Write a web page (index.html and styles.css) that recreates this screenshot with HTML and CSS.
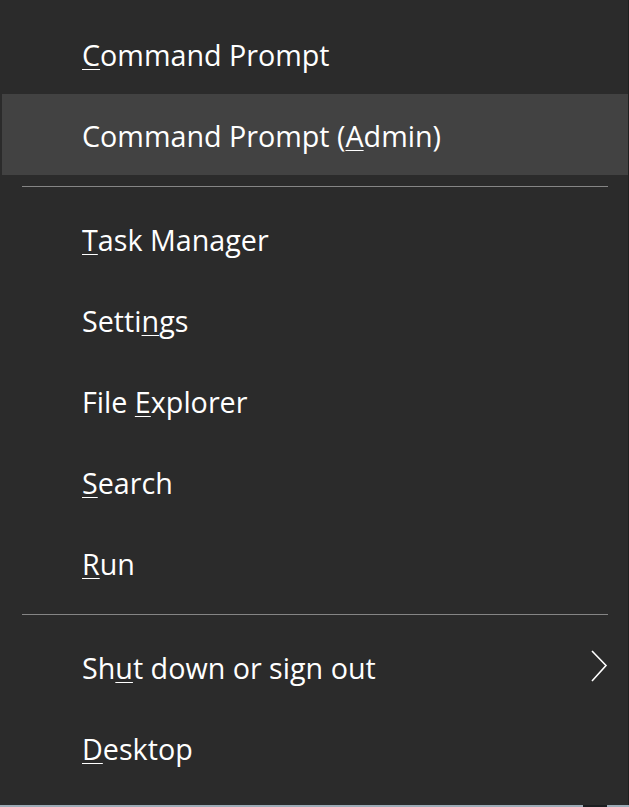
FILE: index.html
```html
<!DOCTYPE html>
<html lang="en">
<head>
    <meta charset="UTF-8">
    <meta name="viewport" content="width=device-width, initial-scale=1.0">
    <title>Quick Link Menu</title>
    <link rel="stylesheet" href="styles.css">
</head>
<body>
    <nav class="menu">
        <div class="menu-item"><span><u>C</u>ommand Prompt</span></div>
        <div class="menu-item active"><span>Command Prompt (<u>A</u>dmin)</span></div>

        <div class="separator"></div>

        <div class="menu-item"><span><u>T</u>ask Manager</span></div>
        <div class="menu-item"><span>Setti<u>n</u>gs</span></div>
        <div class="menu-item"><span>File <u>E</u>xplorer</span></div>
        <div class="menu-item"><span><u>S</u>earch</span></div>
        <div class="menu-item"><span><u>R</u>un</span></div>

        <div class="separator"></div>

        <div class="menu-item has-sub">
            <span>Sh<u>u</u>t down or sign out</span>
            <svg class="chevron" width="18" height="34" viewBox="0 0 18 34">
                <polyline points="2,2 16,16.5 2,32" fill="none" stroke="#fff" stroke-width="1.6"/>
            </svg>
        </div>
        <div class="menu-item"><span><u>D</u>esktop</span></div>
    </nav>
    <div class="taskbar-edge">
        <div class="edge-gap"></div>
    </div>
</body>
</html>
```

FILE: styles.css
```css
html, body {
    margin: 0;
    padding: 0;
    background-color: #2b2b2b;
}
body {
    font-family: 'Open Sans', 'Noto Sans', 'DejaVu Sans', sans-serif;
    color: #ffffff;
    width: 629px;
    height: 807px;
    overflow: hidden;
    display: flex;
    flex-direction: column;
}
.menu {
    flex: 1;
    padding-top: 13px;
    border-right: 1px solid #1f1f1f;
}
.menu-item {
    display: flex;
    align-items: center;
    justify-content: space-between;
    height: 81px;
    margin: 0 0 0 2px;
    padding: 1px 20px 0 80px;
    box-sizing: border-box;
    font-size: 28.7px;
}
.menu-item.active {
    background-color: #424242;
}
.menu-item u {
    text-decoration-thickness: 1px;
    text-underline-offset: 3px;
}
.chevron {
    display: block;
    margin-top: -2px;
}
.separator {
    height: 1px;
    margin: 11px 20px 11px 22px;
    background-color: #858585;
}
.taskbar-edge {
    height: 2px;
    background-color: #9eacb8;
    display: flex;
    justify-content: flex-end;
    padding-right: 22px;
}
.edge-gap {
    width: 24px;
    background-color: #1c1f22;
}
```
